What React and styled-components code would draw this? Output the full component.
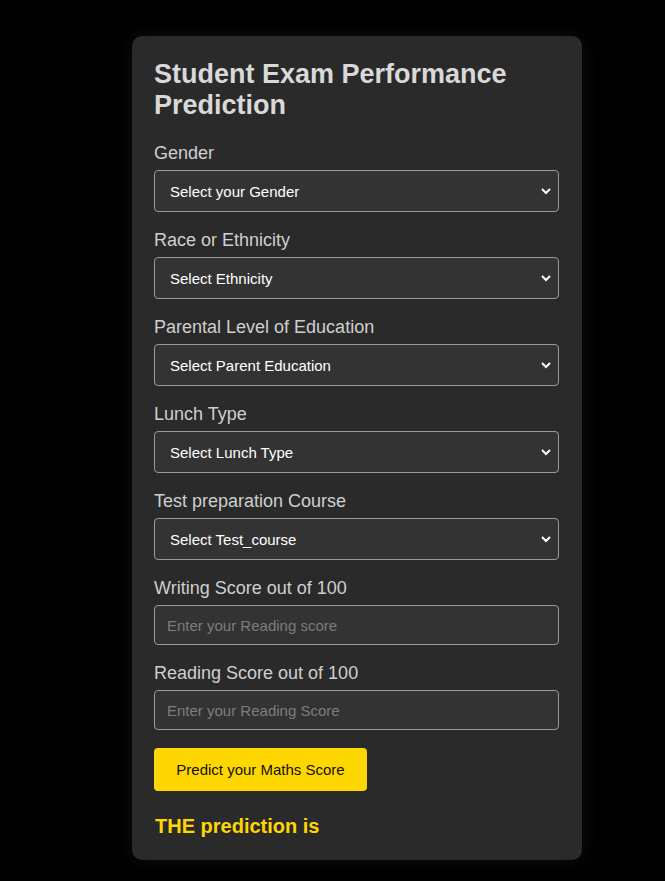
import React from 'react'
import styled, { createGlobalStyle } from 'styled-components'

const GlobalStyle = createGlobalStyle`
  html, body {
    margin: 0;
    background: #000;
  }
  body {
    font-family: "Liberation Sans", Arial, sans-serif;
  }
`

const Page = styled.div`
  min-height: 881px;
  padding: 36px 0 0 132px;
  box-sizing: border-box;
`

const Card = styled.form`
  width: 450px;
  box-sizing: border-box;
  padding: 22px;
  background: #2a2a2a;
  border-radius: 10px;
  box-shadow: 0 0 22px rgba(255, 255, 255, 0.06);
`

const Title = styled.h1`
  margin: 0 0 20px;
  padding-top: 1px;
  font-size: 27px;
  line-height: 31px;
  font-weight: bold;
  color: #d9d9d9;
`

const Field = styled.div`
  display: flex;
  flex-direction: column;
  gap: 6px;
  margin-bottom: 16px;
`

const Label = styled.label`
  padding-top: 2px;
  font-size: 18px;
  line-height: 21px;
  color: #cfcfcf;
`

const Select = styled.select`
  appearance: none;
  width: 405px;
  height: 42px;
  box-sizing: border-box;
  padding: 0 30px 0 15px;
  background: #333333 url("data:image/svg+xml;utf8,<svg xmlns='http://www.w3.org/2000/svg' width='12' height='8' viewBox='0 0 12 8'><path d='M2 2l4 4 4-4' fill='none' stroke='white' stroke-width='2'/></svg>") no-repeat right 6px center;
  border: 1px solid #9a9a9a;
  border-radius: 4px;
  color: #fff;
  font-family: inherit;
  font-size: 15px;
`

const Input = styled.input`
  width: 405px;
  height: 40px;
  box-sizing: border-box;
  padding: 0 12px;
  background: #333333;
  border: 1px solid #9a9a9a;
  border-radius: 4px;
  color: #fff;
  font-family: inherit;
  font-size: 15px;
  &::placeholder {
    color: #7d7d7d;
  }
`

const Button = styled.button`
  margin-top: 2px;
  width: 213px;
  height: 43px;
  background: #ffd700;
  border: none;
  border-radius: 4px;
  color: #111;
  font-family: inherit;
  font-size: 15px;
`

const Result = styled.h2`
  margin: 23px 0 0 1px;
  font-size: 20px;
  line-height: 24px;
  font-weight: bold;
  color: #ffd700;
`

const selects = [
  ['Gender', 'Select your Gender'],
  ['Race or Ethnicity', 'Select Ethnicity'],
  ['Parental Level of Education', 'Select Parent Education'],
  ['Lunch Type', 'Select Lunch Type'],
  ['Test preparation Course', 'Select Test_course'],
]

const inputs = [
  ['Writing Score out of 100', 'Enter your Reading score'],
  ['Reading Score out of 100', 'Enter your Reading Score'],
]

export default function App() {
  return (
    <Page>
      <GlobalStyle />
      <Card onSubmit={(e) => e.preventDefault()}>
        <Title>Student Exam Performance Prediction</Title>
        {selects.map(([label, option]) => (
          <Field key={label}>
            <Label>{label}</Label>
            <Select defaultValue="">
              <option value="" disabled>
                {option}
              </option>
            </Select>
          </Field>
        ))}
        {inputs.map(([label, placeholder]) => (
          <Field key={label}>
            <Label>{label}</Label>
            <Input type="number" placeholder={placeholder} />
          </Field>
        ))}
        <Button type="submit">Predict your Maths Score</Button>
        <Result>THE prediction is</Result>
      </Card>
    </Page>
  )
}
